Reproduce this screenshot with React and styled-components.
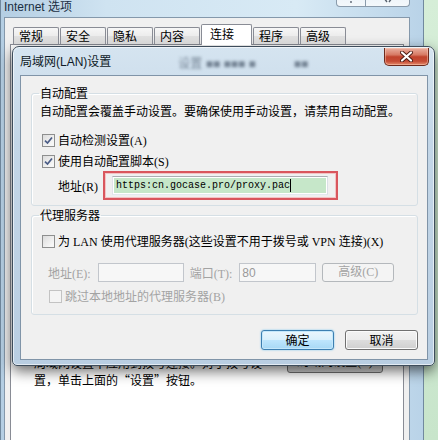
import React from "react";
import styled, { createGlobalStyle } from "styled-components";

const uiFont = `"Liberation Serif", "Noto Sans CJK SC", serif`;
const sansFont = `"Liberation Sans", "Noto Sans CJK SC", sans-serif`;

const GlobalStyle = createGlobalStyle`
  * { box-sizing: border-box; }
  html, body { margin: 0; padding: 0; }
  body {
    background: #d2ead3;
    font-family: ${uiFont};
    font-size: 12px;
    color: #000;
    overflow: hidden;
  }
`;

const Desktop = styled.div`
  position: relative;
  width: 438px;
  height: 440px;
  overflow: hidden;
  background: linear-gradient(180deg, #d6eed8, #c8e5cb);
`;

/* ---------- outer "Internet 选项" window ---------- */

const OuterWindow = styled.div`
  display: flex;
  flex-direction: column;
  width: 424px;
  height: 470px;
  margin-top: -10px;
  padding: 0 13px 0 3px;
  border: 1px solid #71899e;
  border-radius: 8px 8px 0 0;
  background: linear-gradient(90deg, #b4cee3 0%, #cfe3f1 25%, #d8eaf5 70%, #b9d3e8 100%);
`;

const OuterTitleBar = styled.div`
  display: flex;
  align-items: flex-start;
  height: 26px;
  flex-shrink: 0;
`;

const OuterTitle = styled.div`
  margin-top: 9px;
  font-family: ${sansFont};
  font-size: 12px;
  line-height: 14px;
  color: #1b2f43;
`;

const CaptionButtons = styled.div`
  display: flex;
  margin-left: auto;
`;

const CaptionButton = styled.div`
  width: ${(p) => p.$w}px;
  height: 16px;
  border: 1px solid #8a9bab;
  border-top: none;
  border-left: ${(p) => (p.$first ? "1px solid #8a9bab" : "none")};
  border-radius: ${(p) => (p.$first ? "0 0 0 4px" : "0 0 4px 0")};
  background: linear-gradient(180deg, #e9f1f7, #f4f8fb);
  display: flex;
  align-items: flex-end;
  justify-content: center;
  padding-bottom: 3px;
`;

const OuterClient = styled.div`
  flex: 1;
  display: flex;
  flex-direction: column;
  background: #f0f0f0;
  border: 1px solid #8498ab;
  padding: 6px 5px 0 5px;
`;

const TabStrip = styled.div`
  position: relative;
  z-index: 1;
  display: flex;
  align-items: flex-end;
  height: 21px;
  margin-bottom: -1px;
  padding-left: 3px;
`;

const Tab = styled.div`
  width: ${(p) => (p.$active ? 51 : 46)}px;
  height: ${(p) => (p.$active ? 21 : 17)}px;
  margin: ${(p) => (p.$active ? "0 1px 0 0" : "0 1px 1px 0")};
  padding: ${(p) => (p.$active ? "2px 0 0 8px" : "1px 0 0 5px")};
  border: 1px solid #898c95;
  border-bottom: none;
  border-radius: 2px 2px 0 0;
  background: ${(p) =>
    p.$active
      ? "#ffffff"
      : "linear-gradient(180deg, #f7f7f7 0%, #ececec 50%, #e0e0e0 51%, #d6d6d6 100%)"};
  font-family: "Noto Sans CJK SC", sans-serif;
  font-size: 12px;
  line-height: 14px;
  color: #000;
`;

const TabPanel = styled.div`
  flex: 1;
  background: #ffffff;
  border: 1px solid #898c95;
  padding: 309px 20px 0 23px;
`;

const LanRow = styled.div`
  display: flex;
  align-items: flex-start;
`;

const LanText = styled.div`
  width: 253px;
  line-height: 17px;
  white-space: nowrap;
  font-family: "Noto Sans CJK SC", sans-serif;
`;

const LanButton = styled.div`
  width: 96px;
  height: 22px;
  margin: -3px 0 0 0;
  border: 1px solid #707070;
  border-radius: 3px;
  background: linear-gradient(180deg, #f2f2f2 0%, #ebebeb 50%, #dddddd 51%, #cfcfcf 100%);
  text-align: center;
  line-height: 20px;
  font-size: 12px;
`;

/* ---------- LAN settings dialog ---------- */

const Dialog = styled.div`
  position: absolute;
  left: 12px;
  top: 46px;
  width: 423px;
  height: 320px;
  display: flex;
  flex-direction: column;
  padding: 0 6px 5px 7px;
  border: 1px solid #3e4d5c;
  border-radius: 7px 7px 5px 5px;
  background: linear-gradient(180deg, #d5e4f0 0%, #c3d6e7 30%, #b9cee2 100%);
  box-shadow: 0 5px 14px rgba(0, 0, 0, 0.6), inset 0 0 0 1px rgba(255, 255, 255, 0.6);
`;

const DialogTitleBar = styled.div`
  display: flex;
  align-items: flex-start;
  height: 28px;
  flex-shrink: 0;
`;

const DialogTitle = styled.div`
  margin-top: 8px;
  font-family: ${sansFont};
  font-size: 12px;
  line-height: 14px;
  color: #0f1b28;
`;

const GlassBlur = styled.div`
  margin: ${(p) => p.$m};
  font-family: ${sansFont};
  font-size: 12px;
  line-height: 14px;
  color: rgba(20, 35, 55, 0.5);
  filter: blur(1.4px);
  white-space: nowrap;
`;

const CloseButton = styled.div`
  margin: 1px -1px 0 auto;
  width: 45px;
  height: 18px;
  border: 1px solid #6d2a1d;
  border-top: none;
  border-radius: 0 0 5px 5px;
  background: linear-gradient(180deg, #eab0a0 0%, #d77a64 40%, #c0432c 52%, #c54c35 78%, #e58c6c 100%);
  box-shadow: inset 0 0 0 1px rgba(255, 210, 190, 0.45);
  display: flex;
  align-items: center;
  justify-content: center;
`;

const DialogClient = styled.div`
  flex: 1;
  display: flex;
  flex-direction: column;
  background: #f0f0f0;
  border: 1px solid #8094a8;
  padding: 10px 9px 0 10px;
`;

const Group = styled.fieldset`
  margin: ${(p) => p.$mt || 0}px 0 0 0;
  min-width: 0;
  padding: ${(p) => p.$pad};
  border: 1px solid #d5dfe5;
  border-radius: 3px;
  box-shadow: inset 1px 1px 0 #ffffff;
`;

const Legend = styled.legend`
  padding: 0 1px;
  margin-left: -1px;
  font-size: 12px;
  line-height: 14px;
  font-family: "Noto Sans CJK SC", sans-serif;
`;

const Desc = styled.div`
  line-height: 14px;
  font-family: "Noto Sans CJK SC", sans-serif;
  white-space: nowrap;
`;

const CheckRow = styled.label`
  display: flex;
  align-items: center;
  height: 16px;
  margin: ${(p) => p.$m};
  white-space: nowrap;
  color: ${(p) => (p.$disabled ? "#a3a3a3" : "#000")};
`;

const Box = styled.span`
  width: 13px;
  height: 13px;
  margin-right: 3px;
  border: 1px solid ${(p) => (p.$disabled ? "#c3c3c3" : "#8e8f8f")};
  background: ${(p) =>
    p.$disabled ? "#f4f4f4" : "linear-gradient(135deg, #dcdcdc 0%, #f7f7f7 80%)"};
  display: flex;
  align-items: center;
  justify-content: center;
  flex-shrink: 0;
`;

const AddressRow = styled.div`
  display: flex;
  align-items: center;
  margin: 2px 0 0 18px;
`;

const FieldLabel = styled.span`
  margin-right: ${(p) => p.$mr}px;
  color: ${(p) => (p.$disabled ? "#a3a3a3" : "#000")};
  white-space: nowrap;
`;

const RedMark = styled.div`
  padding: 3px 8px 3px 7px;
  border: 2px solid #d9565d;
  box-shadow: inset 0 0 0 1px #f3c3c5;
`;

const ScriptInput = styled.div`
  width: 216px;
  height: 19px;
  padding: 1px;
  border: 1px solid #abadb3;
  border-color: #abadb3 #dbdfe6 #e3e9ef #e2e3ea;
  background: #ffffff;
`;

const ScriptValue = styled.div`
  display: flex;
  align-items: center;
  height: 15px;
  padding-left: 2px;
  background: #c6e7c9;
  font-family: "Liberation Mono", monospace;
  font-size: 10px;
  color: #000;
`;

const Caret = styled.span`
  width: 1px;
  height: 13px;
  background: #000;
`;

const ProxyRow = styled.div`
  display: flex;
  align-items: center;
  margin: 14px 0 0 8px;
`;

const DisabledInput = styled.div`
  width: ${(p) => p.$w}px;
  height: 19px;
  margin-right: ${(p) => p.$mr}px;
  padding: 2px 0 0 2px;
  border: 1px solid #c2c6cc;
  background: #f7f7f7;
  font-family: ${sansFont};
  font-size: 12px;
  line-height: 14px;
  color: #9a9a9a;
`;

const DisabledButton = styled.div`
  width: 72px;
  height: 19px;
  border: 1px solid #b4b8bc;
  border-radius: 3px;
  background: #f4f4f4;
  text-align: center;
  line-height: 17px;
  color: #a3a3a3;
`;

const ButtonRow = styled.div`
  display: flex;
  justify-content: flex-end;
  gap: 11px;
  margin-top: 15px;
`;

const DialogButton = styled.div`
  width: 73px;
  height: 20px;
  border: 1px solid ${(p) => (p.$primary ? "#3c7fb1" : "#707070")};
  border-radius: 3px;
  background: ${(p) =>
    p.$primary
      ? "linear-gradient(180deg, #eaf6fd 0%, #d9f0fc 50%, #bee6fd 51%, #a7d9f5 100%)"
      : "linear-gradient(180deg, #f2f2f2 0%, #ebebeb 50%, #dddddd 51%, #cfcfcf 100%)"};
  box-shadow: ${(p) =>
    p.$primary ? "inset 0 0 0 1px #c5e8fb, 0 0 2px #6ec3ef" : "inset 0 0 0 1px #fbfbfb"};
  font-family: "Noto Sans CJK SC", sans-serif;
  font-size: 12px;
  line-height: 18px;
  text-align: center;
`;

function CheckBox({ checked, disabled }) {
  return (
    <Box $disabled={disabled}>
      {checked && (
        <svg width="9" height="9" viewBox="0 0 9 9">
          <path d="M1 4.6 L3.5 7 L8 1.5" fill="none" stroke="#4a5c86" strokeWidth="1.7" />
        </svg>
      )}
    </Box>
  );
}

export default function App() {
  const tabs = ["常规", "安全", "隐私", "内容", "连接", "程序", "高级"];

  return (
    <Desktop>
      <GlobalStyle />
      <OuterWindow>
        <OuterTitleBar>
          <OuterTitle>Internet 选项</OuterTitle>
          <CaptionButtons>
            <CaptionButton $w={30} $first>
              <svg width="6" height="5" viewBox="0 0 6 5">
                <path d="M3 0 L3 2" stroke="#55606c" strokeWidth="1.4" />
                <circle cx="3" cy="4" r="0.9" fill="#55606c" />
              </svg>
            </CaptionButton>
            <CaptionButton $w={44}>
              <svg width="10" height="5" viewBox="0 0 10 5">
                <path d="M1 0 L4 4 M9 0 L6 4" stroke="#55606c" strokeWidth="1.4" />
              </svg>
            </CaptionButton>
          </CaptionButtons>
        </OuterTitleBar>
        <OuterClient>
          <TabStrip>
            {tabs.map((t) => (
              <Tab key={t} $active={t === "连接"}>{t}</Tab>
            ))}
          </TabStrip>
          <TabPanel>
            <LanRow>
              <LanText>
                局域网设置不应用到拨号连接。对于拨号设
                <br />
                置，单击上面的“设置”按钮。
              </LanText>
              <LanButton>局域网设置(L)</LanButton>
            </LanRow>
          </TabPanel>
        </OuterClient>
      </OuterWindow>

      <Dialog>
        <DialogTitleBar>
          <DialogTitle>局域网(LAN)设置</DialogTitle>
          <GlassBlur $m="10px 0 0 67px">设置 ■■ ■■■ ■</GlassBlur>
          <GlassBlur $m="10px 0 0 38px">■■</GlassBlur>
          <CloseButton>
            <svg width="13" height="11" viewBox="0 0 13 11">
              <path d="M2 1.5 L11 9.5 M11 1.5 L2 9.5" stroke="#4a1a12" strokeWidth="4" strokeLinecap="round" />
              <path d="M2 1.5 L11 9.5 M11 1.5 L2 9.5" stroke="#ffffff" strokeWidth="2.2" strokeLinecap="round" />
            </svg>
          </CloseButton>
        </DialogTitleBar>

        <DialogClient>
          <Group $pad="4px 8px 5px 8px">
            <Legend>自动配置</Legend>
            <Desc>自动配置会覆盖手动设置。要确保使用手动设置，请禁用自动配置。</Desc>
            <CheckRow $m="14px 0 0 2px">
              <CheckBox checked />
              自动检测设置(A)
            </CheckRow>
            <CheckRow $m="5px 0 0 2px">
              <CheckBox checked />
              使用自动配置脚本(S)
            </CheckRow>
            <AddressRow>
              <FieldLabel $mr={5}>地址(R)</FieldLabel>
              <RedMark>
                <ScriptInput>
                  <ScriptValue>
                    https:cn.gocase.pro/proxy.pac
                    <Caret />
                  </ScriptValue>
                </ScriptInput>
              </RedMark>
            </AddressRow>
          </Group>

          <Group $mt={2} $pad="11px 8px 10px 8px">
            <Legend>代理服务器</Legend>
            <CheckRow $m="0 0 0 2px">
              <CheckBox />
              为 LAN 使用代理服务器(这些设置不用于拨号或 VPN 连接)(X)
            </CheckRow>
            <ProxyRow>
              <FieldLabel $mr={7} $disabled>地址(E):</FieldLabel>
              <DisabledInput $w={86} $mr={6} />
              <FieldLabel $mr={7} $disabled>端口(T):</FieldLabel>
              <DisabledInput $w={77} $mr={6}>80</DisabledInput>
              <DisabledButton>高级(C)</DisabledButton>
            </ProxyRow>
            <CheckRow $m="6px 0 0 9px" $disabled>
              <CheckBox disabled />
              跳过本地地址的代理服务器(B)
            </CheckRow>
          </Group>

          <ButtonRow>
            <DialogButton $primary>确定</DialogButton>
            <DialogButton>取消</DialogButton>
          </ButtonRow>
        </DialogClient>
      </Dialog>
    </Desktop>
  );
}
